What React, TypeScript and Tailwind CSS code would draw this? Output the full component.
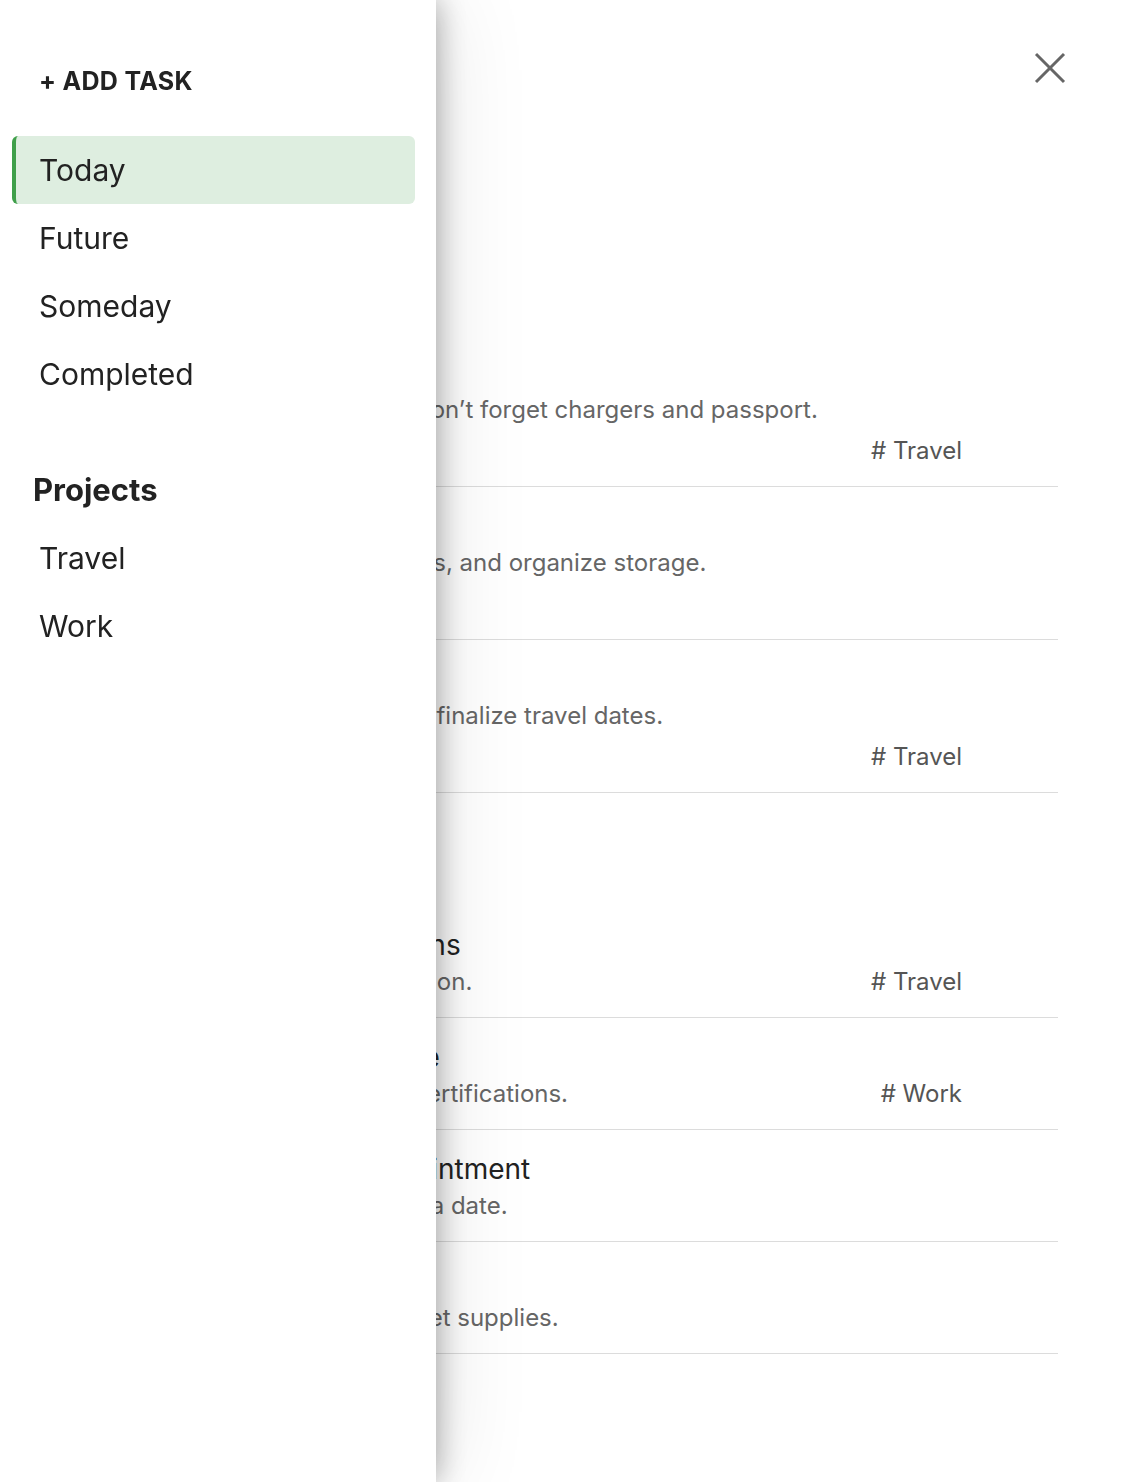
import React from 'react';

type Task = {
  title: string;
  desc: string;
  due?: boolean;
  tag?: string;
};

const todayTasks: Task[] = [
  { title: 'Pack for the trip', desc: 'Pack all clothes and sandals. Don’t forget chargers and passport.', due: true, tag: 'Travel' },
  { title: 'Clean the garage', desc: 'Sort the boxes, donate old items, and organize storage.', due: true },
  { title: 'Book flights', desc: 'Compare flight ticket fares and finalize travel dates.', due: true, tag: 'Travel' },
];

const laterTasks: Task[] = [
  { title: 'Compare some hotel options', desc: 'Pick one closer to the train station.', tag: 'Travel' },
  { title: 'Prepare resume and profile', desc: 'Add recent projects and new certifications.', tag: 'Work' },
  { title: 'Schedule this dentist appointment', desc: 'Call the dentist office and pick a date.' },
  { title: 'Buy groceries', desc: 'Get milk, rice, eggs, fruit and pet supplies.' },
];

const TaskRow: React.FC<{ task: Task }> = ({ task }) => (
  <li className="flex items-end justify-between border-b border-[#dcdcdc] pt-5 pb-[17px]">
    <div className="flex flex-col">
      <span className="text-[28px] leading-[38px] text-[#222]">{task.title}</span>
      <span className="text-[24px] leading-[36px] text-[#666]">{task.desc}</span>
      {task.due && <div className="mt-1 h-[37px]" />}
    </div>
    {task.tag && (
      <span className="mr-[96px] text-[24px] leading-[36px] text-[#555]"># {task.tag}</span>
    )}
  </li>
);

const NavItem: React.FC<{ label: string; active?: boolean }> = ({ label, active }) => (
  <a
    href="#"
    className={
      active
        ? 'ml-3 flex h-[68px] w-[403px] items-center rounded-md border-l-4 border-[#3f9f4a] bg-[#deeee0] pl-[23px] text-[30px] text-[#222]'
        : 'ml-3 flex h-[68px] w-[403px] items-center pl-[27px] text-[30px] text-[#222]'
    }
  >
    {label}
  </a>
);

export default function App() {
  return (
    <div className="min-h-screen bg-white font-['Inter',sans-serif]">
      <main className="mx-auto w-[978px] pt-[334px]">
        <ul>
          {todayTasks.map((t) => (
            <TaskRow key={t.title} task={t} />
          ))}
        </ul>
        <div className="h-[113px]" />
        <ul>
          {laterTasks.map((t) => (
            <TaskRow key={t.title} task={t} />
          ))}
        </ul>
      </main>

      <button className="fixed top-[52px] right-[72px] text-[#666]" aria-label="Close menu">
        <svg width="32" height="32" viewBox="0 0 32 32" fill="none" stroke="currentColor" strokeWidth="3">
          <line x1="2" y1="2" x2="30" y2="30" />
          <line x1="30" y1="2" x2="2" y2="30" />
        </svg>
      </button>

      <aside className="fixed top-0 left-0 flex h-screen w-[436px] flex-col bg-white shadow-[0_0_30px_rgba(0,0,0,0.35),0_0_90px_rgba(0,0,0,0.12)]">
        <button className="mt-[65px] ml-[39px] self-start text-[25px] leading-[32px] font-bold tracking-[0.3px] text-[#222]">
          + ADD TASK
        </button>
        <nav className="mt-[39px] flex flex-col">
          <NavItem label="Today" active />
          <NavItem label="Future" />
          <NavItem label="Someday" />
          <NavItem label="Completed" />
        </nav>
        <h3 className="mt-[62px] mb-[14px] ml-[33px] text-[31px] leading-[40px] font-bold text-[#222]">Projects</h3>
        <nav className="flex flex-col">
          <NavItem label="Travel" />
          <NavItem label="Work" />
        </nav>
      </aside>
    </div>
  );
}
